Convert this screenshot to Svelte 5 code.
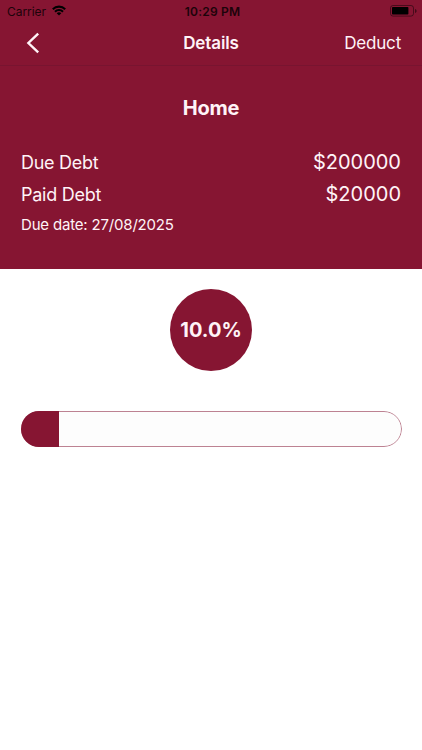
<script>
  let title = 'Home';
  let dueDebt = 200000;
  let paidDebt = 20000;
  let dueDate = '27/08/2025';

  $: percent = (paidDebt / dueDebt) * 100;
</script>

<div class="screen">
  <header>
    <div class="status-bar">
      <div class="carrier">
        <span class="carrier-name">Carrier</span>
        <svg width="14" height="11" viewBox="0 0 14 11" fill="none" stroke="currentColor" stroke-width="2.1">
          <path d="M0.8 4.2a8.8 8.8 0 0 1 12.4 0" />
          <path d="M3 6.7a5.7 5.7 0 0 1 8 0" />
          <path d="M7 10.6 4.7 8.3a3.3 3.3 0 0 1 4.6 0z" fill="currentColor" stroke="none" />
        </svg>
      </div>
      <span class="time">10:29 PM</span>
      <svg class="battery" width="28" height="12" viewBox="0 0 28 12">
        <rect x="0.5" y="0.5" width="23" height="10.6" rx="2.5" fill="none" stroke="currentColor" stroke-opacity="0.45" />
        <rect x="2" y="2" width="16.4" height="7.6" rx="0.8" fill="currentColor" />
        <path d="M25 4v4c1-.4 1.6-1.1 1.6-2S26 4.4 25 4z" fill="currentColor" fill-opacity="0.5" />
      </svg>
    </div>

    <nav>
      <button class="back" aria-label="Back">
        <svg width="14" height="22" viewBox="0 0 14 22" fill="none" stroke="currentColor" stroke-width="2.4">
          <path d="M12.2 1.6 2.4 11l9.8 9.4" />
        </svg>
      </button>
      <span class="nav-title">Details</span>
      <button class="deduct">Deduct</button>
    </nav>
  </header>

  <section class="summary">
    <h1>{title}</h1>
    <div class="row">
      <span class="label">Due Debt</span>
      <span class="amount">${dueDebt}</span>
    </div>
    <div class="row">
      <span class="label">Paid Debt</span>
      <span class="amount">${paidDebt}</span>
    </div>
    <p class="date">Due date: {dueDate}</p>
  </section>

  <main>
    <div class="circle"><span>{percent.toFixed(1)}%</span></div>
    <div class="progress">
      <div class="bar" style="width: {percent}%"></div>
    </div>
  </main>
</div>

<style>
  :global(body) {
    background: #fff;
  }

  .screen {
    min-height: 750px;
    font-family: Inter, "Liberation Sans", sans-serif;
    color: #fff3f7;
    background: #fff;
  }

  header {
    height: 66px;
    box-sizing: border-box;
    background: #861532;
    border-bottom: 1px solid #781430;
  }

  .status-bar {
    display: grid;
    grid-template-columns: 1fr auto 1fr;
    align-items: center;
    height: 22px;
    padding: 0 4px 0 7px;
    color: #1c030a;
    font-size: 12px;
  }

  .carrier {
    display: flex;
    align-items: center;
    gap: 6px;
  }

  .carrier svg {
    color: #000;
    margin-top: -2px;
  }

  .carrier-name {
    letter-spacing: -0.05px;
  }

  .time {
    font-weight: 600;
    letter-spacing: 0.2px;
  }

  .battery {
    justify-self: end;
    color: #000;
    margin-top: -1px;
  }

  nav {
    display: grid;
    grid-template-columns: 1fr auto 1fr;
    align-items: center;
    height: 42px;
    padding: 0 21px;
  }

  button {
    padding: 0;
    border: none;
    background: none;
    color: inherit;
    font: inherit;
  }

  .back {
    display: flex;
    justify-self: start;
    padding-left: 5px;
  }

  .nav-title {
    font-size: 17px;
    font-weight: 600;
    letter-spacing: -0.1px;
  }

  .deduct {
    justify-self: end;
    font-size: 17px;
    letter-spacing: -0.2px;
  }

  .summary {
    height: 203px;
    box-sizing: border-box;
    padding: 29px 21px 0;
    background: #861532;
  }

  h1 {
    margin: 0 0 25px;
    font-size: 20px;
    line-height: 26px;
    font-weight: 700;
    letter-spacing: -0.2px;
    text-align: center;
  }

  .row {
    display: flex;
    justify-content: space-between;
    align-items: center;
    height: 32px;
  }

  .label {
    font-size: 18px;
    letter-spacing: -0.27px;
  }

  .amount {
    font-size: 20px;
  }

  .date {
    margin: 5px 0 0;
    font-size: 15px;
    line-height: 20px;
    letter-spacing: -0.18px;
  }

  main {
    padding: 20px 20.5px 0;
  }

  .circle {
    display: flex;
    align-items: center;
    justify-content: center;
    width: 82px;
    height: 82px;
    margin: 0 auto 40px;
    border-radius: 50%;
    background: #861532;
    font-size: 20px;
    font-weight: 700;
  }

  .progress {
    height: 36px;
    box-sizing: border-box;
    overflow: hidden;
    border-radius: 18px;
    background: #fdfdfd;
    position: relative;
  }

  /* outline sits over the track, the filled part hides it on the left */
  .progress::before {
    content: '';
    position: absolute;
    inset: 0;
    border: 1px solid #bd8292;
    border-radius: 18px;
  }

  .bar {
    position: relative;
    height: 100%;
    background: #861532;
  }
</style>
